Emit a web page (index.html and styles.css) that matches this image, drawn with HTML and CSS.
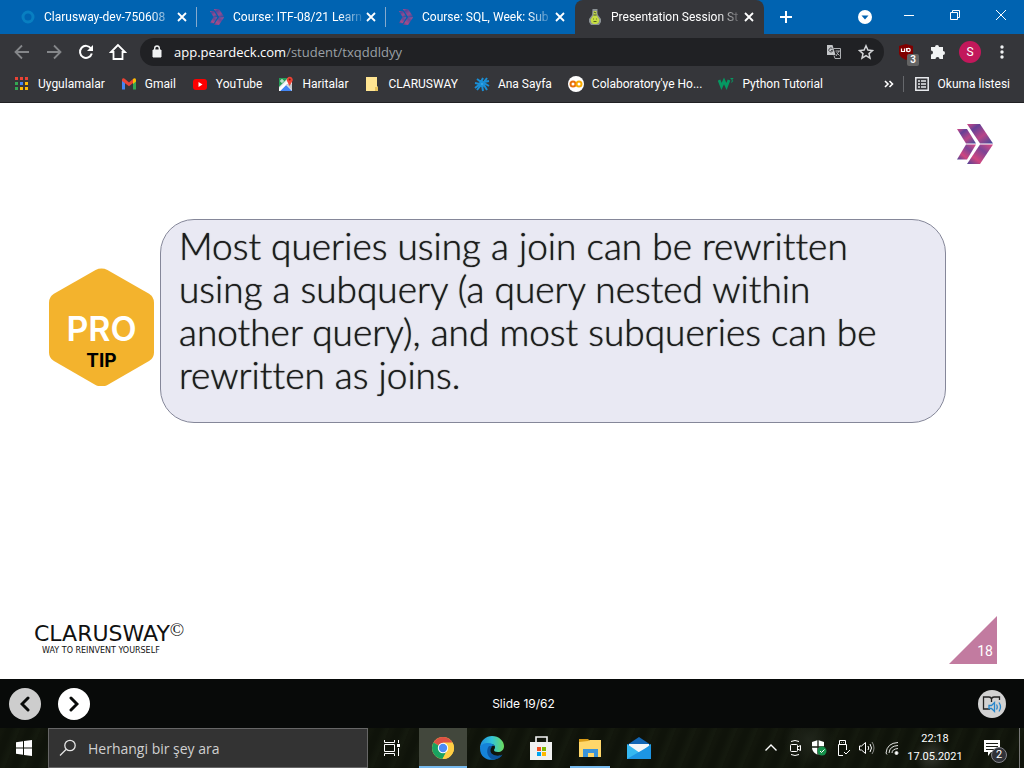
FILE: index.html
```html
<!DOCTYPE html>
<html lang="tr">
<head>
<meta charset="utf-8">
<meta name="viewport" content="width=device-width, initial-scale=1">
<title>Presentation Session Student</title>
<link rel="stylesheet" href="styles.css">
</head>
<body>
<svg class="defs" aria-hidden="true">
  <defs>
    <linearGradient id="g1" x1="0" y1="0" x2="1" y2="1"><stop offset="0" stop-color="#d84a86"/><stop offset=".25" stop-color="#654096"/><stop offset=".6" stop-color="#b84688"/><stop offset="1" stop-color="#3b4a9c"/></linearGradient>
    <linearGradient id="g2" x1="0" y1="1" x2="1" y2="0"><stop offset="0" stop-color="#4b4297"/><stop offset=".3" stop-color="#d0477f"/><stop offset=".65" stop-color="#7d4496"/><stop offset="1" stop-color="#dd4a83"/></linearGradient>
    <linearGradient id="edge1" x1="0" y1="0" x2="1" y2="0"><stop offset="0" stop-color="#1f8fe0"/><stop offset=".5" stop-color="#32c4d8"/><stop offset="1" stop-color="#6ddc5c"/></linearGradient>
    <symbol id="x" viewBox="0 0 10 10"><path d="M1 1l8 8M9 1l-8 8" stroke="currentColor" stroke-width="1.8"/></symbol>
    <symbol id="claru" viewBox="0 0 36 40">
      <path d="M0 5h10l9 14.500H9z" fill="url(#g1)"/><path d="M9 20.500h10l-9 15H0z" fill="url(#g2)"/>
      <path d="M10 0h13l13 19.500H23z" fill="url(#g1)"/><path d="M23 20.500h13L23 40H10z" fill="url(#g2)"/>
    </symbol>
  </defs>
</svg>

<header class="browser">
  <div class="titlebar">
    <div class="tabs">
      <div class="tab">
        <svg class="fav" viewBox="0 0 16 16"><circle cx="8" cy="8" r="5" fill="none" stroke="#087fc1" stroke-width="3"/></svg>
        <span class="tab-title">Clarusway-dev-750608</span><button class="tab-close" aria-label="Kapat"><svg><use href="#x"/></svg></button>
      </div>
      <div class="tab">
        <svg class="fav faded" viewBox="0 0 36 40"><use href="#claru"/></svg>
        <span class="tab-title">Course: ITF-08/21 Learn</span><button class="tab-close" aria-label="Kapat"><svg><use href="#x"/></svg></button>
      </div>
      <div class="tab no-line">
        <svg class="fav faded" viewBox="0 0 36 40"><use href="#claru"/></svg>
        <span class="tab-title">Course: SQL, Week: Sub</span><button class="tab-close" aria-label="Kapat"><svg><use href="#x"/></svg></button>
      </div>
      <div class="tab active">
        <svg class="fav" viewBox="0 0 16 16"><path d="M5.500 0h5v4l.5 2 3 4v3l-2 3H4l-2-3v-3l3-4z" fill="#8b9195"/><path d="M6.500 2h3v4l3 4.500-1 3.500-2 1h-3l-2-1-1-3.500 3-4.500z" fill="#c6dd42"/><path d="M7 3l2 1M6.500 6h3" stroke="#45513a"/><path d="M6 10h.8M9.200 10h.8M6.500 12.500h3" stroke="#526521"/></svg>
        <span class="tab-title">Presentation Session St</span><button class="tab-close" aria-label="Kapat"><svg><use href="#x"/></svg></button>
      </div>
      <button class="new-tab" aria-label="Yeni sekme"><svg width="12" height="12" viewBox="0 0 12 12"><path d="M6 0v12M0 6h12" stroke="#fff" stroke-width="2"/></svg></button>
    </div>
    <div class="window-controls">
      <button class="tab-search" aria-label="Sekme ara"><svg width="14" height="14" viewBox="0 0 14 14"><circle cx="7" cy="7" r="7" fill="#fff"/><path d="M3.500 5.500h7L7 9.500z" fill="#0063b1"/></svg></button>
      <button aria-label="Küçült"><svg width="10" height="10" viewBox="0 0 10 10"><path d="M0 5.500h10" stroke="#fff"/></svg></button>
      <button aria-label="Geri yükle"><svg width="10" height="10" viewBox="0 0 10 10"><path d="M.5 2.500h7v7h-7zM2.500 2.500v-2h7v7h-2" fill="none" stroke="#fff"/></svg></button>
      <button aria-label="Kapat"><svg width="10" height="10" viewBox="0 0 10 10"><path d="M0 0l10 10M10 0L0 10" stroke="#fff"/></svg></button>
    </div>
  </div>

  <div class="toolbar">
    <nav class="tool-group" aria-label="Gezinme">
      <button aria-label="Geri"><svg width="16" height="16" viewBox="0 0 16 16" fill="none" stroke="#85878a" stroke-width="1.800"><path d="M15 8H2M8 1.500L1.500 8 8 14.500"/></svg></button>
      <button aria-label="İleri"><svg width="16" height="16" viewBox="0 0 16 16" fill="none" stroke="#85878a" stroke-width="1.800"><path d="M1 8h13M8 1.500L14.500 8 8 14.500"/></svg></button>
      <button aria-label="Yenile"><svg width="16" height="16" viewBox="0 0 16 16"><path d="M13 4.500A6 6 0 1 0 13.800 9.500" fill="none" stroke="#fff" stroke-width="2"/><path d="M15 1v6H9z" fill="#fff"/></svg></button>
      <button aria-label="Ana sayfa"><svg width="18" height="18" viewBox="0 0 18 18"><path d="M9 2L2 9h2.500v7h9V9H16z" fill="none" stroke="#fff" stroke-width="1.800"/></svg></button>
    </nav>
    <div class="omnibox">
      <svg class="lock" width="10" height="14" viewBox="0 0 10 14"><path d="M1 5h8v7H1z" fill="#f1f3f4" stroke="#f1f3f4"/><path d="M2.700 5V3.300a2.300 2.300 0 0 1 4.600 0V5" fill="none" stroke="#f1f3f4" stroke-width="1.400"/></svg>
      <div class="url">app.peardeck.com<span>/student/txqddldyy</span></div>
      <button aria-label="Çevir"><svg width="14" height="14" viewBox="0 0 14 14"><path d="M0 0h5.500l3 10H0z" fill="#c4c6c9"/><path d="M6.500 3.500h7v10H8l-1-3" fill="none" stroke="#aeb0b3"/><path d="M5.500 3.800A2 2 0 1 0 5.800 5.500H4" fill="none" stroke="#44464a"/><path d="M8.500 6H13M12 6l-3 5M9.500 7.500l3 3" stroke="#aeb0b3" fill="none"/></svg></button>
      <button aria-label="Yer işareti ekle"><svg width="16" height="16" viewBox="0 0 16 16"><path d="M8 1.800l1.900 4.300 4.600.4L11 9.600l1 4.500-4-2.400-4 2.400 1-4.500-3.500-3.100 4.600-.4z" fill="none" stroke="#d4d6d8" stroke-width="1.500"/></svg></button>
    </div>
    <div class="tool-group">
      <button class="ublock" aria-label="uBlock"><svg width="16" height="16" viewBox="0 0 16 16"><path d="M8 0l7 2v7c0 3-3 5-7 7-4-2-7-4-7-7V2z" fill="#800000"/><path d="M3.500 4.500v3h3v-3M8.500 4v3.500" fill="none" stroke="#fff" stroke-width="1.200"/><circle cx="10.500" cy="6" r="1.700" fill="none" stroke="#fff" stroke-width="1.200"/></svg><span class="counter">3</span></button>
      <button aria-label="Uzantılar"><svg width="16" height="16" viewBox="0 0 16 16"><path d="M5 3a2 2 0 0 1 4 0h4v4a2 2 0 0 1 0 4v4H9.500a2 2 0 0 0-4 0H1v-4.500a2 2 0 0 0 0-4V3z" fill="#f1f3f4"/></svg></button>
      <button aria-label="Profil"><span class="avatar">S</span></button>
      <button aria-label="Menü"><svg width="4" height="16" viewBox="0 0 4 16" fill="#f1f3f4"><circle cx="2" cy="3" r="1.700"/><circle cx="2" cy="8" r="1.700"/><circle cx="2" cy="13" r="1.700"/></svg></button>
    </div>
  </div>

  <nav class="bookmarks" aria-label="Yer işaretleri">
    <a href="#"><svg viewBox="0 0 16 16"><path d="M1 1h3v3H1zM6 1h3v3H6zM11 1h3v3h-3z" fill="#ea4335"/><path d="M1 6h3v3H1z" fill="#34a853"/><path d="M6 6h3v3H6z" fill="#4285f4"/><path d="M11 6h3v3h-3zM11 11h3v3h-3zM6 11h3v3H6z" fill="#fbbc05"/><path d="M1 11h3v3H1z" fill="#34a853"/></svg>Uygulamalar</a>
    <a href="#"><svg viewBox="0 0 16 16"><path d="M1 4h3v9.500H1z" fill="#4285f4"/><path d="M12 4h3v9.500h-3z" fill="#34a853"/><path d="M1 4c0-2 2-2 3-1l4 3.500L12 3v4L8 10.200 1 5z" fill="#ea4335"/><path d="M12 3c1-1 3-1 3 1v1.500L12 8z" fill="#fbbc04"/></svg>Gmail</a>
    <a href="#"><svg viewBox="0 0 16 16"><rect x="1" y="3" width="14" height="11" rx="3" fill="#f00"/><path d="M6.500 6l4 2.500-4 2.500z" fill="#fff"/></svg>YouTube</a>
    <a href="#"><svg viewBox="0 0 16 16"><path d="M1 2h13v13H1z" fill="#e8eaed"/><path d="M1 2h9L1 11z" fill="#279b58"/><path d="M2 15l6-6 6 6z" fill="#4285f4"/><path d="M1 13L12 2l2 2-6 5-6 6H1z" fill="#fff"/><path d="M8 8l6 6V8z" fill="#c5c8cc"/><path d="M11.500 10L9 5a3 3 0 1 1 5.500 0z" fill="#ea4335"/><circle cx="11.700" cy="3.500" r="1" fill="#7b1c14"/><circle cx="4" cy="5" r="1.200" fill="none" stroke="#fff"/></svg>Haritalar</a>
    <a href="#"><svg viewBox="0 0 16 16"><path d="M2 1h11v9l1 1v4H2z" fill="#ffe592"/><path d="M11 11h3v4h-3z" fill="#e8c45e"/></svg>CLARUSWAY</a>
    <a href="#"><svg viewBox="0 0 16 16" fill="none" stroke="#1a8fd6" stroke-width="2"><path d="M3 3l4 3 2-4M13 2l-3 4 5-1M1 7l5 1-5 4M10 7l5 3M7 9l-4 5M8 9l1 6M10 9l3 5"/><circle cx="8" cy="8" r="2" fill="#39a8e8"/></svg>Ana Sayfa</a>
    <a href="#"><svg viewBox="0 0 16 16"><circle cx="8" cy="8" r="8" fill="#fff"/><circle cx="5" cy="8" r="2.500" fill="none" stroke="#e8710a" stroke-width="2"/><circle cx="11" cy="8" r="2.500" fill="none" stroke="#f9ab00" stroke-width="2"/></svg>Colaboratory'ye Ho...</a>
    <a href="#"><svg viewBox="0 0 16 16" fill="none" stroke="#059862"><path d="M1 4l2.500 6.500L6 5l2.500 5.500L11 4" stroke-width="2.800"/><path d="M12.500 2.500H15l-1.500 1.500c2 0 1.500 2.500-.5 2"/></svg>Python Tutorial</a>
    <button class="more" aria-label="Diğer"><svg width="10" height="8" viewBox="0 0 10 8"><path d="M1 1l3 3-3 3M5.500 1l3 3-3 3" fill="none" stroke="#fff" stroke-width="1.600"/></svg></button>
    <a class="reading" href="#"><svg viewBox="0 0 16 16"><path d="M1.800 1.800h12.400v12.400H1.800z" fill="none" stroke="#e8eaed" stroke-width="1.500"/><path d="M4 5h2M7 5h5M4 8h2M7 8h5M4 11h2M7 11h5" stroke="#e8eaed" stroke-width="1.500"/></svg>Okuma listesi</a>
  </nav>
</header>

<main class="slide">
  <svg class="brand" viewBox="0 0 36 40" role="img" aria-label="Clarusway"><use href="#claru"/></svg>
  <section class="tip">
    <div class="badge">
      <svg viewBox="0 0 106 120" aria-hidden="true"><path d="M47 2Q53-1 59 2L101 26Q106 29 106 35V85Q106 91 101 94L59 118Q53 121 47 118L5 94Q0 91 0 85V35Q0 29 5 26Z" fill="#f3b32d"/></svg>
      <div class="badge-text"><strong>PRO</strong><b>TIP</b></div>
    </div>
    <p class="card">Most queries using a join can be rewritten<br>using a subquery (a query nested within<br>another query), and most subqueries can be<br>rewritten as joins.</p>
  </section>
  <footer class="slide-footer">
    <div class="wordmark"><div class="name">CLARUSWAY<span>©</span></div><div class="motto">WAY TO REINVENT YOURSELF</div></div>
    <div class="page-number">18</div>
  </footer>
</main>

<div class="player">
  <div class="player-nav">
    <button class="round dim" aria-label="Önceki"><svg width="10" height="16" viewBox="0 0 10 16"><path d="M8 2L2 8l6 6" fill="none" stroke="#080a09" stroke-width="3" stroke-linecap="round"/></svg></button>
    <button class="round" aria-label="Sonraki"><svg width="10" height="16" viewBox="0 0 10 16"><path d="M2 2l6 6-6 6" fill="none" stroke="#080a09" stroke-width="3" stroke-linecap="round"/></svg></button>
  </div>
  <span class="progress">Slide 19/62</span>
  <button class="reader" aria-label="Sesli oku"><svg width="20" height="20" viewBox="0 0 20 20" fill="none"><path d="M8 15H1.500V3H7q2 0 2.500 2Q10 3 12 3h5.500v3M9.500 4v4" stroke="#222" stroke-width="1.300"/><path d="M7 11.500h2.500l3-3v9l-3-3H7zM14.500 10.500q1.500 2.500 0 5M17 8.500q3 4.500 0 9" stroke="#2586cc" stroke-width="1.300"/></svg></button>
</div>

<footer class="taskbar">
  <button class="start" aria-label="Başlat"><svg width="16" height="16" viewBox="0 0 16 16" fill="#fff"><path d="M0 2.200L7 1.200V7.500H0zM8 1l8-1v7.500H8zM0 8.500h7v6.300l-7-1zM8 8.500h8V16l-8-1z"/></svg></button>
  <label class="search"><svg width="18" height="18" viewBox="0 0 18 18" fill="none" stroke="#e6e6e6" stroke-width="1.300"><circle cx="11" cy="6.500" r="5.200"/><path d="M7 10.500L1 16.500"/></svg><input type="text" placeholder="Herhangi bir şey ara" aria-label="Herhangi bir şey ara"></label>
  <div class="apps">
    <button aria-label="Görev görünümü"><svg width="16" height="16" viewBox="0 0 16 16" fill="none" stroke="#fff"><path d="M.5 0v2.500h10V0M.5 4.500h10v7H.5zM.5 16v-2.500h10V16M14.500 0v3M14.500 8v8"/><path d="M13 4h3v3h-3z" fill="#fff" stroke="none"/></svg></button>
    <button class="current" aria-label="Chrome"><svg width="24" height="24" viewBox="0 0 24 24"><circle cx="12" cy="12" r="11" fill="#ffce44"/><path d="M12 12L2.500 6.500a11 11 0 0 1 19 0z" fill="#dd5144"/><path d="M2.500 6.500a11 11 0 0 0 9 16.500L16 14l-4-2z" fill="#1aa260"/><path d="M12 6.500h9.500A11 11 0 0 1 11.500 23L17 14z" fill="#ffce44"/><circle cx="12" cy="12" r="5.200" fill="#fff"/><circle cx="12" cy="12" r="4.200" fill="#4c8bf5"/></svg></button>
    <button aria-label="Edge"><svg width="24" height="24" viewBox="0 0 24 24"><path d="M0 11C1 4 6 0 12 0c7 0 12 5 12 10 0 4-3 6-6 6-3 0-4-1-4-2s1-1 1-3-2-3-4-3C6 8 3 12 3 16z" fill="url(#edge1)"/><path d="M0 12c1-4 5-5 8-5 4 0 6 2 7 3-4-1-6 2-6 5 0 4 4 8 9 7-6 4-18 2-18-10z" fill="#1583d8"/><path d="M9 10c-4 5-1 13 5 13.500 4-.2 7-2 8.500-5-4 2.500-12 1-12-4 0-2 1-3.500 2-4z" fill="#0c559f"/></svg></button>
    <button aria-label="Mağaza"><svg width="24" height="24" viewBox="0 0 24 24"><path d="M7 7V1h11v6" fill="none" stroke="#f4f4f4" stroke-width="1.600"/><path d="M1 6h22v18H1z" fill="#f1f1f1"/><path d="M8 11h4v4H8z" fill="#f25022"/><path d="M13 11h4v4h-4z" fill="#7fba00"/><path d="M8 16h4v4H8z" fill="#00a4ef"/><path d="M13 16h4v4h-4z" fill="#ffb900"/></svg></button>
    <button class="open" aria-label="Dosya Gezgini"><svg width="24" height="24" viewBox="0 0 24 24"><path d="M1 3h9l2 2h-1v3H1z" fill="#d99b16"/><path d="M1 6l9-1 2-1h11v17H1z" fill="#ffd76a"/><path d="M5 13h15v8h-4v-4h-6v4H5z" fill="#3b94d9"/></svg></button>
    <button aria-label="Posta"><svg width="24" height="24" viewBox="0 0 24 24"><path d="M0 9l12-8 12 8v4H0z" fill="#1266b5"/><path d="M2 8h20v9H2z" fill="#f3f6f8"/><path d="M0 8l13 9L24 8v15H0z" fill="#35b8f1"/><path d="M0 23L24 9v14z" fill="#1d95e3"/></svg></button>
  </div>
  <div class="tray">
    <button aria-label="Gizli simgeler"><svg width="16" height="16" viewBox="0 0 16 16"><path d="M2.500 10.500L8 5l5.500 5.500" fill="none" stroke="#fff" stroke-width="1.400"/></svg></button>
    <button aria-label="Kamera"><svg width="16" height="16" viewBox="0 0 16 16" fill="none" stroke="#fff"><rect x="3.500" y="4.500" width="7" height="7" rx="1"/><path d="M10.500 7l3-1.500v5l-3-1.500M4 1.500q4-2 8 0M4 14.500q4 2 8 0"/></svg></button>
    <button aria-label="Güvenlik"><svg width="16" height="16" viewBox="0 0 16 16"><path d="M7 0l6 2v5c0 4-2 6-6 8C3 13 1 11 1 7V2z" fill="#fff"/><path d="M7 0v15M1 7h12" stroke="#151b11" stroke-width="1.300"/><circle cx="11" cy="11" r="4.500" fill="#15904a"/><path d="M9 11l1.500 1.500L13.500 9.500" fill="none" stroke="#fff"/></svg></button>
    <button aria-label="USB"><svg width="16" height="16" viewBox="0 0 16 16" fill="none" stroke="#fff"><path d="M4.500 4.500V.5h6v4M8 15.500H3.500v-11h8V10M6.500 2.500h.5M8.500 2.500H9M9 12l2 2 4-4"/></svg></button>
    <button aria-label="Ses"><svg width="16" height="16" viewBox="0 0 16 16" fill="none" stroke="#fff"><path d="M.5 6h2l4-3.500v11L2.500 10h-2zM9 6q1.500 2 0 4M11 4q3 4 0 8"/><path d="M13 2q4 6 0 12" stroke="#8b8c89"/></svg></button>
    <button class="wifi" aria-label="Ağ"><svg width="16" height="16" viewBox="0 0 16 16" fill="none" stroke="#e5e6e4"><path d="M2 13Q3 3 14 2.500M5 13q.5-7 9-7.500M8 13q0-4 6-4.500M2 13l1 1.500"/><circle cx="12.500" cy="13" r="1.500" fill="#fff"/></svg></button>
    <time class="clock" datetime="2021-05-17T22:18"><span>22:18</span><span>17.05.2021</span></time>
    <button class="notice" aria-label="Bildirimler"><svg width="18" height="18" viewBox="0 0 18 18"><path d="M1 1h16v12H8l-3 4v-4H1z" fill="#fff"/><path d="M3 4.500h12M3 7.500h12M3 10.500h8" stroke="#1b1e18" stroke-width="1.200"/></svg><span class="notice-count">2</span></button>
  </div>
</footer>
</body>
</html>
```
FILE: styles.css
```css
* { box-sizing: border-box; }
body {
  margin: 0;
  min-height: 100vh;
  display: flex;
  flex-direction: column;
  background: #fff;
  font-family: Roboto, "Noto Sans", sans-serif;
  font-size: 12px;
  color: #fff;
}
button {
  display: flex;
  align-items: center;
  justify-content: center;
  padding: 0;
  border: 0;
  background: none;
  color: inherit;
  font: inherit;
}
a { color: inherit; text-decoration: none; }
svg { display: block; flex: none; }
.defs { position: absolute; width: 0; height: 0; }

.titlebar { display: flex; height: 34px; background: #0063b1; }
.tabs { display: flex; flex: 1; min-width: 0; padding-left: 8px; }
.tab {
  display: flex;
  align-items: center;
  flex: 0 1 189px;
  min-width: 0;
  padding: 0 10px 0 12px;
  background: linear-gradient(#86aacd, #86aacd) right center / 1px 20px no-repeat;
}
.tab.no-line { background: none; }
.tab.active { background: #35363a; border-radius: 8px 8px 0 0; }
.fav { width: 16px; height: 16px; margin-right: 8px; }
.faded { opacity: .8; }
.tab-title {
  flex: 1;
  overflow: hidden;
  white-space: nowrap;
  -webkit-mask-image: linear-gradient(to right, #000 80%, transparent);
  mask-image: linear-gradient(to right, #000 80%, transparent);
}
.tab-close { width: 10px; height: 16px; }
.tab-close svg { width: 10px; height: 10px; }
.new-tab { width: 44px; }
.window-controls { display: flex; padding-bottom: 4px; }
.window-controls button { width: 46px; }
.window-controls .tab-search { width: 42px; padding-top: 4px; }

.toolbar { display: flex; align-items: center; gap: 6px; height: 36px; padding: 0 6px; background: #35363a; }
.tool-group { display: flex; }
.tool-group button { width: 32px; height: 32px; }
.omnibox {
  display: flex;
  align-items: center;
  flex: 1;
  height: 28px;
  padding: 0 2px 0 12px;
  border-radius: 14px;
  background: #202124;
}
.omnibox button { width: 32px; height: 28px; }
.url { flex: 1; padding-left: 12px; font-family: "Open Sans", sans-serif; font-size: 13px; white-space: nowrap; }
.url span { color: #9aa0a6; }
.ublock { position: relative; }
.counter {
  position: absolute;
  right: 3px;
  bottom: 2px;
  width: 12px;
  height: 12px;
  border-radius: 2px;
  background: #646464;
  font-size: 10px;
  font-weight: 600;
  line-height: 12px;
}
.avatar { width: 22px; height: 22px; border-radius: 50%; background: #c2185b; line-height: 22px; }
.bookmarks {
  display: flex;
  align-items: center;
  gap: 16px;
  height: 33px;
  padding: 0 14px 5px;
  border-bottom: 1px solid #202124;
  background: #35363a;
  white-space: nowrap;
}
.bookmarks a { display: flex; align-items: center; gap: 8px; }
.bookmarks a svg { width: 16px; height: 16px; }
.bookmarks .more { margin-left: auto; }
.bookmarks .reading { margin-left: -7px; padding-left: 10px; border-left: 1px solid #66686c; }

.slide { display: flex; flex-direction: column; flex: 1; padding: 21px 27px 15px 34px; color: #1b1b1b; }
.brand { width: 36px; height: 40px; align-self: flex-end; margin-right: 4px; }
.tip { display: flex; align-items: center; gap: 6px; margin: 55px 51px auto 15px; }
.badge { display: grid; flex: none; width: 105px; padding-top: 12px; }
.badge svg { grid-area: 1 / 1; width: 100%; }
.badge-text {
  grid-area: 1 / 1;
  display: flex;
  flex-direction: column;
  align-items: center;
  padding-top: 43px;
  font-family: Inter, sans-serif;
  color: #000;
}
.badge-text strong { font-size: 34px; font-weight: 600; line-height: 36px; color: #fff; }
.badge-text b { font-size: 19px; line-height: 28px; }
.card {
  flex: 1;
  min-height: 204px;
  margin: 0;
  padding: 4px 18px;
  border: 1px solid #858799;
  border-radius: 34px;
  background: #e9e9f3;
  font-family: Lato, sans-serif;
  font-size: 37px;
  font-weight: 300;
  font-variant-ligatures: none;
  line-height: 43px;
  text-shadow: 0 0 1px #1b1b1b;
}
.slide-footer { display: flex; justify-content: space-between; align-items: flex-end; }
.wordmark { padding-bottom: 8px; font-family: "DejaVu Sans", sans-serif; color: #111; }
.name { display: flex; font-size: 22px; line-height: 24px; }
.name span { font-family: "Liberation Serif", serif; font-size: 19px; line-height: 16px; }
.motto { padding-left: 8px; font-size: 8px; line-height: 10px; }
.page-number {
  display: flex;
  align-items: flex-end;
  justify-content: flex-end;
  width: 48px;
  height: 48px;
  padding: 0 4px 4px;
  background: #c27ba0;
  clip-path: polygon(100% 0, 100% 100%, 0 100%);
  color: #fff;
  font-size: 14px;
  line-height: 18px;
}

.player {
  display: grid;
  grid-template-columns: 1fr auto 1fr;
  align-items: center;
  height: 49px;
  padding: 0 18px 0 9px;
  background: #080a09;
}
.player-nav { display: flex; gap: 17px; }
.round { width: 32px; height: 32px; border-radius: 50%; background: #fff; }
.round.dim { background: #cdcdcd; }
.progress { padding-left: 32px; font-family: Inter, sans-serif; }
.reader { justify-self: end; width: 28px; height: 28px; border-radius: 50%; background: #d2d2d2; }

.taskbar {
  display: flex;
  height: 40px;
  background:
    radial-gradient(circle at 91% 70%, #34372f 0, transparent 18px),
    radial-gradient(circle at 79% 30%, #20251b 0, transparent 26px),
    repeating-linear-gradient(112deg, #12160c 0 3px, #0f130a 7px 11px, #14190e 17px 19px);
}
.start { width: 48px; }
.search {
  display: flex;
  align-items: center;
  gap: 11px;
  flex: 0 1 320px;
  min-width: 0;
  padding: 0 10px;
  border: 1px solid #666;
  background: #333;
}
.search input {
  flex: 1;
  min-width: 0;
  padding: 0;
  border: 0;
  outline: 0;
  background: none;
  color: #fff;
  font: 14px "Open Sans", "Noto Sans", sans-serif;
}
.search input::placeholder { color: #d0d0d0; opacity: 1; }
.apps { display: flex; gap: 1px; }
.apps button { width: 48px; }
.apps .current { margin-left: 2px; background: #42473c; box-shadow: inset 0 -2px #76b9ed; }
.apps .open { background: linear-gradient(#76b9ed, #76b9ed) center bottom / 40px 2px no-repeat; }
.tray { display: flex; margin-left: auto; margin-right: 4px; border-right: 1px solid #777; }
.tray button { width: 24px; }
.tray .wifi { width: 26px; }
.clock { display: flex; flex-direction: column; align-items: center; justify-content: center; width: 60px; font-size: 11px; line-height: 18px; }
.tray .notice { position: relative; width: 54px; }
.notice-count {
  position: absolute;
  right: 12px;
  bottom: 5px;
  width: 16px;
  height: 16px;
  border: 1px solid #85858b;
  border-radius: 50%;
  background: #303238;
  font-size: 11px;
  line-height: 14px;
}
```
